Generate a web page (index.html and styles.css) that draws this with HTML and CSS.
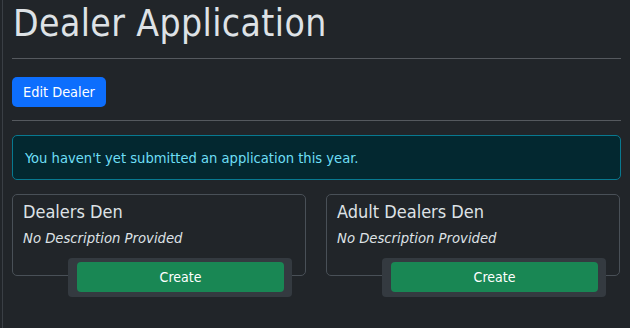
FILE: index.html
```html
<!DOCTYPE html>
<html>
<head>
<meta charset="utf-8">
<link rel="stylesheet" href="styles.css">
</head>
<body>
<div class="rail"></div>
<main class="page">
  <h1 class="title">Dealer Application</h1>
  <hr class="rule rule-top">
  <div class="actions"><button class="btn btn-blue">Edit Dealer</button></div>
  <hr class="rule">
  <div class="alert">You haven't yet submitted an application this year.</div>
  <div class="cards">
    <div class="card-wrap">
      <div class="card">
        <div class="card-title">Dealers Den</div>
        <div class="card-desc">No Description Provided</div>
      </div>
      <div class="card-foot"><button class="btn btn-green">Create</button></div>
    </div>
    <div class="card-wrap">
      <div class="card">
        <div class="card-title">Adult Dealers Den</div>
        <div class="card-desc">No Description Provided</div>
      </div>
      <div class="card-foot"><button class="btn btn-green">Create</button></div>
    </div>
  </div>
</main>
</body>
</html>
```
FILE: styles.css
```css
html, body { margin: 0; padding: 0; }
body {
  background: #212529;
  color: #dee2e6;
  font-family: "DejaVu Sans", sans-serif;
  font-stretch: condensed;
  width: 630px;
  height: 328px;
  overflow: hidden;
  position: relative;
}
.rail {
  position: absolute;
  left: 2px; top: 0; bottom: 0;
  width: 1px;
  background: #3a3f45;
}
.page {
  padding: 0 9px 0 12px;
}
.title {
  margin: 0;
  padding: 4px 0 0 1px;
  font-weight: 400;
  font-size: 37px;
  line-height: 40px;
  color: #dee2e6;
  letter-spacing: 0.4px;
}
.rule {
  border: 0;
  border-top: 1px solid #55595e;
  margin: 0;
}
.rule-top { margin-top: 14px; }
.actions { padding: 18px 0 13px; }
.btn {
  font-family: inherit;
  font-stretch: condensed;
  border: 0;
  color: #fff;
  font-size: 14.4px;
  border-radius: 5px;
  cursor: pointer;
}
.btn-blue {
  background: #0d6efd;
  height: 30px;
  padding: 0 11px;
}
.alert {
  margin-top: 14px;
  height: 45px;
  box-sizing: border-box;
  border: 1px solid #087990;
  background: #032830;
  color: #6edff6;
  border-radius: 5px;
  padding: 0 12px;
  display: flex;
  align-items: center;
  font-size: 14.6px;
}
.cards {
  margin-top: 14px;
  display: grid;
  grid-template-columns: 294px 294px;
  column-gap: 20px;
}
.card {
  border: 1px solid #495057;
  border-radius: 5px;
  height: 82px;
  box-sizing: border-box;
  padding: 5px 10px;
}
.card-title { font-size: 18px; line-height: 24px; }
.card-desc { font-size: 14.7px; font-style: italic; margin-top: 5px; }
.card-foot {
  position: relative;
  margin: -18px 14px 0 56px;
  background: #343a40;
  border-radius: 4px;
  padding: 4px 8px 5px 9px;
}
.btn-green {
  display: block;
  width: 100%;
  height: 30px;
  background: #198754;
  border-radius: 4px;
  font-size: 14px;
}
```
